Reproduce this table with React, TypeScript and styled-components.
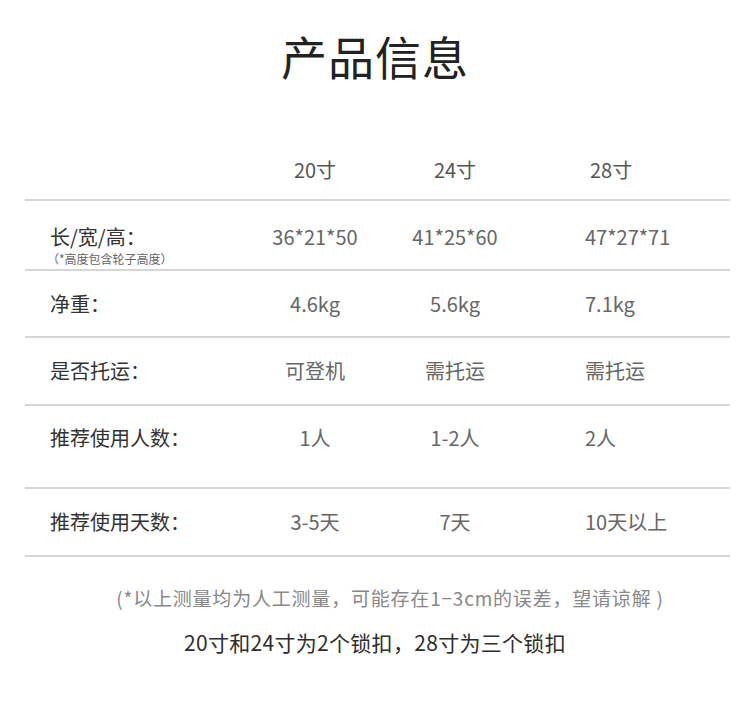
import styled, { createGlobalStyle } from "styled-components";

const GlobalStyle = createGlobalStyle`
  html, body {
    margin: 0;
    padding: 0;
    background: #ffffff;
  }
  body {
    font-family: "Noto Sans CJK SC", "Noto Sans", sans-serif;
  }
`;

type Row = {
  label: string;
  note?: string;
  values: [string, string, string];
  height: number;
  padTop?: number;
};

const rows: Row[] = [
  { label: "长/宽/高：", note: "（*高度包含轮子高度）", values: ["36*21*50", "41*25*60", "47*27*71"], height: 70, padTop: 22 },
  { label: "净重：", values: ["4.6kg", "5.6kg", "7.1kg"], height: 67 },
  { label: "是否托运：", values: ["可登机", "需托运", "需托运"], height: 68 },
  { label: "推荐使用人数：", values: ["1人", "1-2人", "2人"], height: 83, padTop: 18 },
  { label: "推荐使用天数：", values: ["3-5天", "7天", "10天以上"], height: 68 },
];

export default function App() {
  return (
    <Page>
      <GlobalStyle />
      <Title>产品信息</Title>
      <Table>
        <HeadRow>
          <span />
          <HeadCell>20寸</HeadCell>
          <HeadCell>24寸</HeadCell>
          <HeadCell $left>28寸</HeadCell>
        </HeadRow>
        {rows.map((row) => (
          <BodyRow key={row.label} $height={row.height} $padTop={row.padTop}>
            <LabelCell>
              <Label>{row.label}</Label>
              {row.note && <Note>{row.note}</Note>}
            </LabelCell>
            {row.values.map((v, i) => (
              <ValueCell key={i} $left={i === 2}>
                {v}
              </ValueCell>
            ))}
          </BodyRow>
        ))}
      </Table>
      <Disclaimer>(*以上测量均为人工测量，可能存在1−3cm的误差，望请谅解 )</Disclaimer>
      <LockNote>20寸和24寸为2个锁扣，28寸为三个锁扣</LockNote>
    </Page>
  );
}

const Page = styled.div`
  width: 750px;
  height: 707px;
  box-sizing: border-box;
  padding-top: 25px;
  display: flex;
  flex-direction: column;
  align-items: center;
  overflow: hidden;
`;

const Title = styled.h1`
  margin: 0;
  font-size: 46px;
  font-weight: 400;
  line-height: 60px;
  color: #222222;
  letter-spacing: 1px;
`;

const Table = styled.div`
  margin-top: 62px;
  width: 705px;
  align-self: flex-start;
  margin-left: 25px;
  display: flex;
  flex-direction: column;
`;

const columns = "220px 140px 140px 205px";

const HeadRow = styled.div`
  display: grid;
  grid-template-columns: ${columns};
  height: 54px;
  box-sizing: border-box;
  padding-bottom: 8px;
  align-items: center;
  border-bottom: 2px solid #d6d6d6;
`;

const HeadCell = styled.div<{ $left?: boolean }>`
  text-align: ${(p) => (p.$left ? "left" : "center")};
  padding-left: ${(p) => (p.$left ? "65px" : "0")};
  font-size: 20px;
  color: #555555;
`;

const BodyRow = styled.div<{ $height: number; $padTop?: number }>`
  display: grid;
  grid-template-columns: ${columns};
  height: ${(p) => p.$height}px;
  box-sizing: border-box;
  border-bottom: 2px solid #d6d6d6;
  align-items: ${(p) => (p.$padTop ? "start" : "center")};
  padding-top: ${(p) => p.$padTop || 0}px;
`;

const LabelCell = styled.div`
  padding-left: 25px;
  display: flex;
  flex-direction: column;
`;

const Label = styled.div`
  font-size: 20px;
  line-height: 28px;
  color: #333333;
`;

const Note = styled.div`
  font-size: 12px;
  line-height: 16px;
  color: #666666;
  margin-left: -3px;
`;

const ValueCell = styled.div<{ $left?: boolean }>`
  text-align: ${(p) => (p.$left ? "left" : "center")};
  padding-left: ${(p) => (p.$left ? "60px" : "0")};
  font-size: 20px;
  line-height: 28px;
  color: #666666;
`;

const Disclaimer = styled.p`
  margin: 28px 0 0 30px;
  font-size: 19px;
  line-height: 26px;
  letter-spacing: 0.8px;
  color: #888888;
`;

const LockNote = styled.p`
  margin: 18px 0 0;
  font-size: 21px;
  line-height: 26px;
  letter-spacing: 0.3px;
  color: #2e2e2e;
  font-weight: 400;
`;
